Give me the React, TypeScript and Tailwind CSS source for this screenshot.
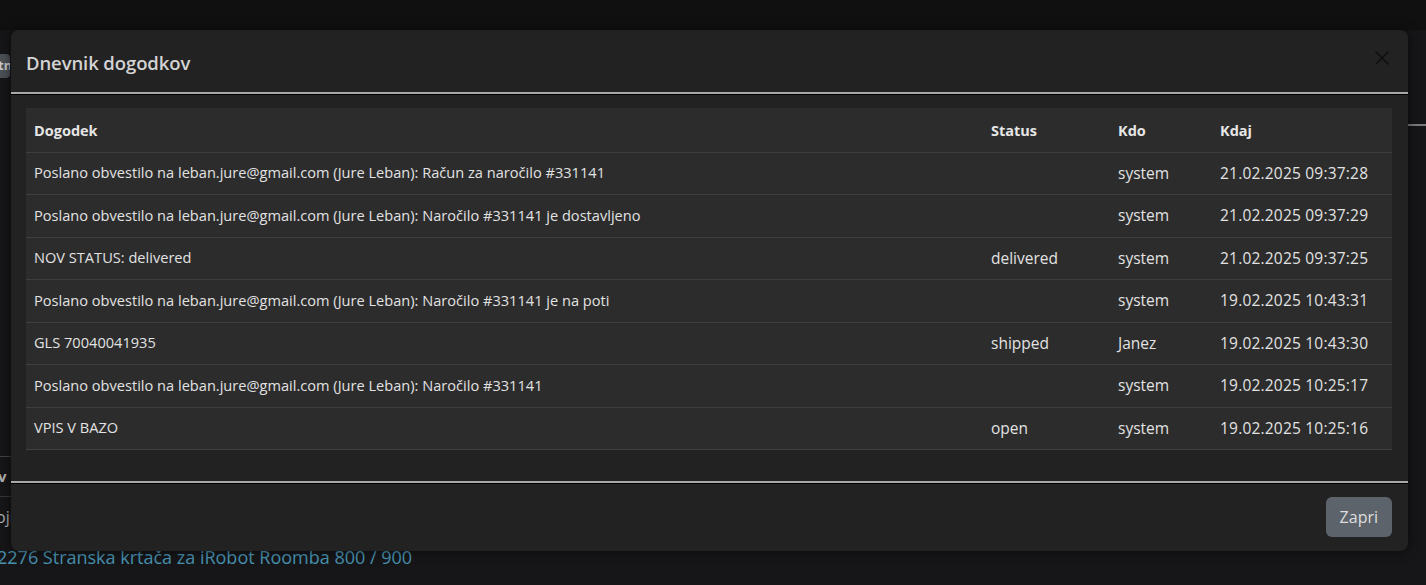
import { X } from 'lucide-react'

type LogRow = {
  event: string
  status: string
  who: string
  when: string
}

const rows: LogRow[] = [
  { event: 'Poslano obvestilo na leban.jure@gmail.com (Jure Leban): Račun za naročilo #331141', status: '', who: 'system', when: '21.02.2025 09:37:28' },
  { event: 'Poslano obvestilo na leban.jure@gmail.com (Jure Leban): Naročilo #331141 je dostavljeno', status: '', who: 'system', when: '21.02.2025 09:37:29' },
  { event: 'NOV STATUS: delivered', status: 'delivered', who: 'system', when: '21.02.2025 09:37:25' },
  { event: 'Poslano obvestilo na leban.jure@gmail.com (Jure Leban): Naročilo #331141 je na poti', status: '', who: 'system', when: '19.02.2025 10:43:31' },
  { event: 'GLS 70040041935', status: 'shipped', who: 'Janez', when: '19.02.2025 10:43:30' },
  { event: 'Poslano obvestilo na leban.jure@gmail.com (Jure Leban): Naročilo #331141', status: '', who: 'system', when: '19.02.2025 10:25:17' },
  { event: 'VPIS V BAZO', status: 'open', who: 'system', when: '19.02.2025 10:25:16' },
]

function BackgroundPage() {
  return (
    <div className="flex h-full flex-col">
      <div className="h-[30px] bg-[#141416]" />
      <div className="flex flex-1 flex-col bg-[#1c1c1e]">
        <div className="mt-[24px] flex h-[24px] w-[10px] items-center overflow-hidden rounded-r bg-[#5f666d] text-[13px] font-bold text-white">
          <span className="-ml-[2px]">tn</span>
        </div>
        <div className="ml-auto mt-[46px] h-[2px] w-[20px] bg-[#9a9a9a]" />
        <div className="mt-[330px] h-px w-[40px] bg-[#555]" />
        <div className="-ml-[2px] mt-[8px] text-[15px] font-bold text-[#ddd]">v</div>
        <div className="mt-[8px] h-px w-[40px] bg-[#444]" />
        <div className="-ml-[4px] mt-[8px] text-[16px] text-[#ddd]">ojr</div>
        <div className="-ml-[3px] mt-[15px] whitespace-nowrap text-[18px] text-[#5ab6dc]">
          2276 Stranska krtača za iRobot Roomba 800 / 900
        </div>
      </div>
    </div>
  )
}

export default function App() {
  return (
    <div className="relative h-[585px] w-[1426px] overflow-hidden bg-[#1c1c1e] font-['Open_Sans','Noto_Sans',sans-serif]">
      <BackgroundPage />

      {/* modal backdrop */}
      <div className="absolute inset-0 bg-black/20" />

      {/* modal */}
      <div className="absolute left-[11px] top-[30px] flex w-[1397px] flex-col rounded-lg bg-[#232222] shadow-[0_0_12px_rgba(0,0,0,0.6)]">
        <div className="flex h-[62px] items-center justify-between pl-[15px] pr-[14px] pt-[3px]">
          <h5 className="text-[18.5px] font-semibold tracking-[-0.1px] text-[#d4d4d4]">Dnevnik dogodkov</h5>
          <button className="-mt-[10px] flex h-6 w-6 items-center justify-center text-[#0e0e0e]">
            <X size={26} strokeWidth={1.5} />
          </button>
        </div>
        <div className="h-[2px] bg-[#a8a8a8] shadow-[0_1px_0_#000]" />

        <div className="px-[15px] pb-[31px] pt-[14px]">
          <table className="w-[1366px] table-fixed border-collapse bg-[#2c2c2c] text-[#e2e2e2]">
            <colgroup>
              <col className="w-[957px]" />
              <col className="w-[127px]" />
              <col className="w-[102px]" />
              <col className="w-[180px]" />
            </colgroup>
            <thead>
              <tr className="h-[44px] border-b border-[#3e3e3e] text-left text-[14.5px] font-bold text-[#e6e6e6]">
                <th className="px-2 pt-[3px]">Dogodek</th>
                <th className="px-2 pt-[3px]">Status</th>
                <th className="px-2 pt-[3px]">Kdo</th>
                <th className="px-2 pt-[3px]">Kdaj</th>
              </tr>
            </thead>
            <tbody>
              {rows.map((row) => (
                <tr key={row.when} className="h-[42.5px] border-b border-[#3e3e3e] text-[15.5px]">
                  <td className="truncate px-2 text-[14.6px]">{row.event}</td>
                  <td className="px-2">{row.status}</td>
                  <td className="px-2">{row.who}</td>
                  <td className="px-2 tracking-[0.2px]">{row.when}</td>
                </tr>
              ))}
            </tbody>
          </table>
        </div>

        <div className="h-[2px] bg-[#a8a8a8] shadow-[0_1px_0_#000]" />
        <div className="flex h-[68px] items-center justify-end px-[16px]">
          <button className="h-[40px] rounded-md bg-[#5c636a] px-[14px] text-[16px] font-medium text-[#dedede]">
            Zapri
          </button>
        </div>
      </div>
    </div>
  )
}
